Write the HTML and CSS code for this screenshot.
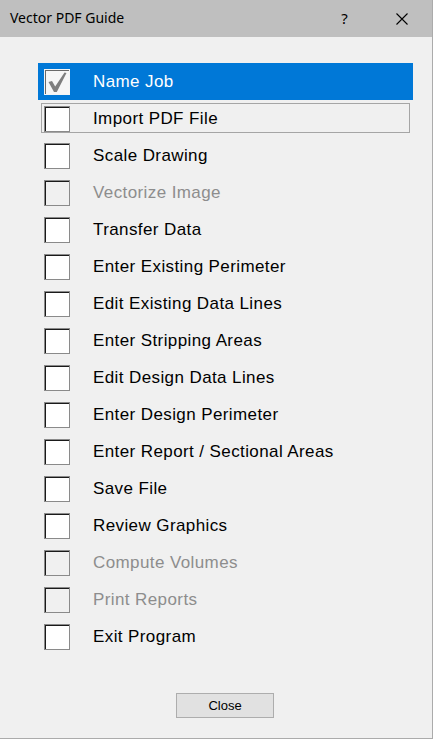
FILE: index.html
```html
<!DOCTYPE html>
<html>
<head>
<meta charset="utf-8">
<link rel="stylesheet" href="styles.css">
</head>
<body>
<div class="window">
  <div class="titlebar">
    <div class="title">Vector PDF Guide</div>
    <div class="cap-btn help">?</div>
    <div class="cap-btn close-x">
      <svg width="12" height="12" viewBox="0 0 12 12"><path d="M0.5 0.5 L11.5 11.5 M11.5 0.5 L0.5 11.5" stroke="#000" stroke-width="1.1" fill="none"/></svg>
    </div>
  </div>
  <div class="content">
    <div class="list">
      <div class="row selected">
        <span class="box checked">
          <svg width="24" height="24" viewBox="0 0 24 24"><path d="M3.5 12 L7 11 L10.2 16.5 L19.5 2.5 L21.5 3 L11.8 22 L9 22 Z" fill="#7e7e7e"/></svg>
        </span>
        <span class="label">Name Job</span>
      </div>
      <div class="row focus"><span class="box"></span><span class="label">Import PDF File</span></div>
      <div class="row"><span class="box"></span><span class="label">Scale Drawing</span></div>
      <div class="row disabled"><span class="box"></span><span class="label">Vectorize Image</span></div>
      <div class="row"><span class="box"></span><span class="label">Transfer Data</span></div>
      <div class="row"><span class="box"></span><span class="label">Enter Existing Perimeter</span></div>
      <div class="row"><span class="box"></span><span class="label">Edit Existing Data Lines</span></div>
      <div class="row"><span class="box"></span><span class="label">Enter Stripping Areas</span></div>
      <div class="row"><span class="box"></span><span class="label">Edit Design Data Lines</span></div>
      <div class="row"><span class="box"></span><span class="label">Enter Design Perimeter</span></div>
      <div class="row"><span class="box"></span><span class="label">Enter Report / Sectional Areas</span></div>
      <div class="row"><span class="box"></span><span class="label">Save File</span></div>
      <div class="row"><span class="box"></span><span class="label">Review Graphics</span></div>
      <div class="row disabled"><span class="box"></span><span class="label">Compute Volumes</span></div>
      <div class="row disabled"><span class="box"></span><span class="label">Print Reports</span></div>
      <div class="row"><span class="box"></span><span class="label">Exit Program</span></div>
    </div>
    <div class="footer">
      <button class="close-btn">Close</button>
    </div>
  </div>
</div>
</body>
</html>
```

FILE: styles.css
```css
html, body {
  margin: 0;
  padding: 0;
  background: #f0f0f0;
}
.window {
  width: 433px;
  height: 739px;
  box-sizing: border-box;
  border-right: 1px solid #ababab;
  border-bottom: 1px solid #ababab;
  background: #f0f0f0;
  overflow: hidden;
  font-family: "Liberation Sans", Arial, sans-serif;
}
.titlebar {
  height: 37px;
  background: #bfbfbf;
  display: flex;
  align-items: center;
  padding-left: 10px;
  padding-right: 2px;
}
.title {
  flex: 1;
  font-family: "Noto Sans", "Open Sans", sans-serif;
  font-size: 14px;
  color: #000;
  padding-bottom: 2px;
}
.cap-btn {
  width: 57px;
  height: 37px;
  display: flex;
  align-items: center;
  justify-content: center;
}
.help {
  font-family: "Noto Sans", sans-serif;
  font-size: 15px;
  color: #000;
  padding-bottom: 2px;
  box-sizing: border-box;
}
.content {
  padding-top: 26px;
}
.list {
  margin-left: 38px;
  width: 375px;
}
.row {
  height: 37px;
  display: flex;
  align-items: center;
  position: relative;
  font-size: 17px;
  letter-spacing: 0.4px;
  color: #000;
}
.row.selected {
  background: #0078d7;
  color: #fff;
}
.row.disabled {
  color: #8d8d8d;
}
.row.focus::after {
  content: "";
  position: absolute;
  left: 3px;
  right: 3px;
  top: 3px;
  bottom: 4px;
  border: 1px solid #a5a5a5;
}
.box {
  width: 26px;
  height: 26px;
  box-sizing: border-box;
  margin-left: 6px;
  background: #fff;
  border: 1px solid #8a8a8a;
  box-shadow: inset 1px 1px 0 #1a1a1a;
  flex: none;
}
.row.disabled .box {
  background: #f0f0f0;
}
.box.checked {
  border: 1px solid #f4f4f4;
  box-shadow: inset 1px 1px 0 #6a6a6a;
  background: #f6f6f6;
  display: flex;
  align-items: center;
  justify-content: center;
}
.box.checked svg {
  display: block;
}
.label {
  margin-left: 23px;
  white-space: nowrap;
}
.footer {
  padding-top: 38px;
  padding-left: 176px;
}
.close-btn {
  width: 98px;
  height: 25px;
  margin: 0;
  padding: 0;
  background: #e1e1e1;
  border: 1px solid #adadad;
  font-family: "Liberation Sans", Arial, sans-serif;
  font-size: 13px;
  color: #000;
  display: block;
}
```
